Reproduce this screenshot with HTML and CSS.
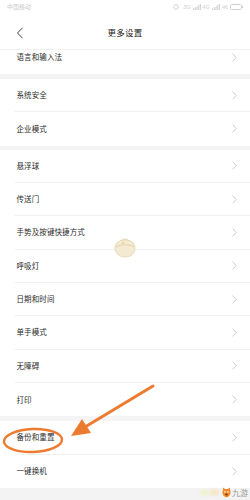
FILE: index.html
```html
<!DOCTYPE html>
<html lang="zh">
<head>
<meta charset="utf-8">
<link rel="stylesheet" href="styles.css">
</head>
<body>
<div class="screen">
  <div class="status">
    <span class="carrier">中国移动</span>
    <div class="sys">
      <svg class="alarm" width="6" height="6" viewBox="0 0 6 6"><circle cx="3" cy="3" r="2.3" fill="none" stroke="#cfcfcf" stroke-width="0.9"/></svg>
      <span>3G</span>
      <svg width="8" height="6" viewBox="0 0 8 6"><path d="M0 6h1.4V4.2H0zM2.2 6h1.4V3H2.2zM4.4 6h1.4V1.6H4.4zM6.6 6H8V0H6.6z" fill="#d2d2d2"/></svg>
      <span>4G</span>
      <svg width="8" height="6" viewBox="0 0 8 6"><path d="M0 6h1.4V4.2H0zM2.2 6h1.4V3H2.2zM4.4 6h1.4V1.6H4.4zM6.6 6H8V0H6.6z" fill="#d2d2d2"/></svg>
      <span>46</span>
      <svg width="13" height="6" viewBox="0 0 13 6"><rect x="0.5" y="0.5" width="11" height="5" rx="1" fill="none" stroke="#cfcfcf"/><rect x="12" y="2" width="1" height="2" fill="#cfcfcf"/></svg>
    </div>
  </div>
  <div class="header">
    <svg class="back" width="8" height="12" viewBox="0 0 8 12"><polyline points="6.5,0.8 1.5,6 6.5,11.2" fill="none" stroke="#444" stroke-width="1"/></svg>
    <div class="title">更多设置</div>
  </div>

  <div class="section">
    <div class="row partial"><span class="label">语言和输入法</span><svg class="chev" width="5" height="9" viewBox="0 0 5 9"><polyline points="0.6,0.6 4.2,4.5 0.6,8.4" fill="none" stroke="#c6c6c6" stroke-width="0.9"/></svg></div>
  </div>
  <div class="gap g5"></div>
  <div class="section">
    <div class="row"><span class="label">系统安全</span><svg class="chev" width="5" height="9" viewBox="0 0 5 9"><polyline points="0.6,0.6 4.2,4.5 0.6,8.4" fill="none" stroke="#c6c6c6" stroke-width="0.9"/></svg></div>
    <div class="row"><span class="label">企业模式</span><svg class="chev" width="5" height="9" viewBox="0 0 5 9"><polyline points="0.6,0.6 4.2,4.5 0.6,8.4" fill="none" stroke="#c6c6c6" stroke-width="0.9"/></svg></div>
  </div>
  <div class="gap g4"></div>
  <div class="section">
    <div class="row"><span class="label">悬浮球</span><svg class="chev" width="5" height="9" viewBox="0 0 5 9"><polyline points="0.6,0.6 4.2,4.5 0.6,8.4" fill="none" stroke="#c6c6c6" stroke-width="0.9"/></svg></div>
    <div class="row"><span class="label">传送门</span><svg class="chev" width="5" height="9" viewBox="0 0 5 9"><polyline points="0.6,0.6 4.2,4.5 0.6,8.4" fill="none" stroke="#c6c6c6" stroke-width="0.9"/></svg></div>
    <div class="row"><span class="label">手势及按键快捷方式</span><svg class="chev" width="5" height="9" viewBox="0 0 5 9"><polyline points="0.6,0.6 4.2,4.5 0.6,8.4" fill="none" stroke="#c6c6c6" stroke-width="0.9"/></svg></div>
    <div class="row"><span class="label">呼吸灯</span><svg class="chev" width="5" height="9" viewBox="0 0 5 9"><polyline points="0.6,0.6 4.2,4.5 0.6,8.4" fill="none" stroke="#c6c6c6" stroke-width="0.9"/></svg></div>
    <div class="row"><span class="label">日期和时间</span><svg class="chev" width="5" height="9" viewBox="0 0 5 9"><polyline points="0.6,0.6 4.2,4.5 0.6,8.4" fill="none" stroke="#c6c6c6" stroke-width="0.9"/></svg></div>
    <div class="row"><span class="label">单手模式</span><svg class="chev" width="5" height="9" viewBox="0 0 5 9"><polyline points="0.6,0.6 4.2,4.5 0.6,8.4" fill="none" stroke="#c6c6c6" stroke-width="0.9"/></svg></div>
    <div class="row"><span class="label">无障碍</span><svg class="chev" width="5" height="9" viewBox="0 0 5 9"><polyline points="0.6,0.6 4.2,4.5 0.6,8.4" fill="none" stroke="#c6c6c6" stroke-width="0.9"/></svg></div>
    <div class="row"><span class="label">打印</span><svg class="chev" width="5" height="9" viewBox="0 0 5 9"><polyline points="0.6,0.6 4.2,4.5 0.6,8.4" fill="none" stroke="#c6c6c6" stroke-width="0.9"/></svg></div>
  </div>
  <div class="gap g5"></div>
  <div class="section">
    <div class="row"><span class="label">备份和重置</span><svg class="chev" width="5" height="9" viewBox="0 0 5 9"><polyline points="0.6,0.6 4.2,4.5 0.6,8.4" fill="none" stroke="#c6c6c6" stroke-width="0.9"/></svg></div>
    <div class="row"><span class="label">一键换机</span><svg class="chev" width="5" height="9" viewBox="0 0 5 9"><polyline points="0.6,0.6 4.2,4.5 0.6,8.4" fill="none" stroke="#c6c6c6" stroke-width="0.9"/></svg></div>
  </div>
  <div class="bottom"></div>

  <svg class="watermark" width="26" height="22" viewBox="0 0 26 22">
    <path d="M3 11 C3 5 8 3 13 3 C18 3 23 5 23 11 C23 17 18 20 13 20 C8 20 3 17 3 11 Z" fill="#f4ead2" stroke="#e2d3ad" stroke-width="0.8"/>
    <path d="M4 10 C8 7 18 7 22 10" fill="none" stroke="#dccba0" stroke-width="0.8"/>
    <path d="M9 4 C10 1.5 16 1.5 17 4" fill="#efe2c0" stroke="#e0d0a8" stroke-width="0.7"/>
    <circle cx="11" cy="6" r="0.8" fill="#cdb98a"/>
  </svg>

  <svg class="annot" width="250" height="500" viewBox="0 0 250 500">
    <ellipse cx="33" cy="440.5" rx="29" ry="11.5" transform="rotate(-2 33 440.5)" fill="none" stroke="#ec7a2f" stroke-width="2.4"/>
    <line x1="153" y1="386" x2="85" y2="427" stroke="#ec7a2f" stroke-width="3" stroke-linecap="round"/>
    <polygon points="71,436 82,419 91,433" fill="#ec7a2f"/>
  </svg>

  <div class="logo">
    <span class="blur b1"></span><span class="blur b2"></span>
    <svg class="mascot" width="9" height="11" viewBox="0 0 9 11"><path d="M1 3 L1 0.5 L3 2 L6 2 L8 0.5 L8 3 C9 5 9 9 4.5 10.5 C0 9 0 5 1 3 Z" fill="#f08a2c"/><circle cx="3" cy="5" r="0.8" fill="#fff"/><circle cx="6" cy="5" r="0.8" fill="#fff"/><ellipse cx="4.5" cy="7.5" rx="1.3" ry="1" fill="#7a3a10"/></svg>
    <span class="jy">九游</span>
  </div>
</div>
</body>
</html>
```

FILE: styles.css
```css
* { box-sizing: border-box; }
html, body { margin: 0; padding: 0; background: #ffffff; }
body { font-family: "Noto Sans CJK SC", "Noto Sans", sans-serif; }

.screen {
  position: relative;
  width: 250px;
  height: 500px;
  overflow: hidden;
  background: #ffffff;
  display: flex;
  flex-direction: column;
}

.status {
  height: 16px;
  flex: none;
  display: flex;
  align-items: center;
  justify-content: space-between;
  padding: 0 7px 2px 7px;
  color: #cccccc;
  font-size: 6px;
  line-height: 8px;
}
.sys {
  display: flex;
  align-items: center;
  gap: 2px;
  font-family: "Liberation Sans", sans-serif;
  font-size: 5.5px;
  color: #cfcfcf;
}
.sys .alarm { margin-right: 2px; }

.header {
  height: 34px;
  flex: none;
  display: flex;
  align-items: center;
  position: relative;
  border-bottom: 1px solid #f1f1f1;
  padding-left: 16px;
}
.back { flex: none; }
.title {
  position: absolute;
  left: 0;
  right: 0;
  top: 0;
  bottom: 0;
  display: flex;
  align-items: center;
  justify-content: center;
  font-size: 8.5px;
  color: #222;
  padding-bottom: 1px;
  letter-spacing: 0.3px;
}

.section {
  flex: none;
  padding-left: 15px;
  background: #ffffff;
}
.row {
  height: 33.33px;
  display: flex;
  align-items: center;
  justify-content: space-between;
  padding: 0 13px 0 1.5px;
  border-bottom: 1px solid #f0f0f0;
}
.row:last-child { border-bottom: none; }
.row.partial {
  height: 24px;
  align-items: flex-start;
  padding-top: 2px;
}
.row.partial .chev { margin-top: 0.5px; }
.label {
  font-size: 7.5px;
  line-height: 10px;
  color: #2a2a2a;
  letter-spacing: 0.1px;
}
.chev { flex: none; }

.gap { flex: none; background: #f4f4f4; }
.g5 { height: 5px; }
.g4 { height: 4px; }
.bottom { flex: 1; background: #f3f3f3; }

.watermark {
  position: absolute;
  left: 112px;
  top: 237px;
}
.annot {
  position: absolute;
  left: 0;
  top: 0;
  pointer-events: none;
}

.logo {
  position: absolute;
  right: 2px;
  bottom: 2px;
  display: flex;
  align-items: center;
  gap: 1px;
}
.blur {
  display: block;
  width: 9px;
  height: 7px;
  border-radius: 50%;
  filter: blur(1.5px);
}
.b1 { background: #eef2d0; }
.b2 { background: #f6e6c4; margin-right: 2px; }
.jy {
  font-size: 8px;
  line-height: 10px;
  color: #9a9a9a;
}
```
